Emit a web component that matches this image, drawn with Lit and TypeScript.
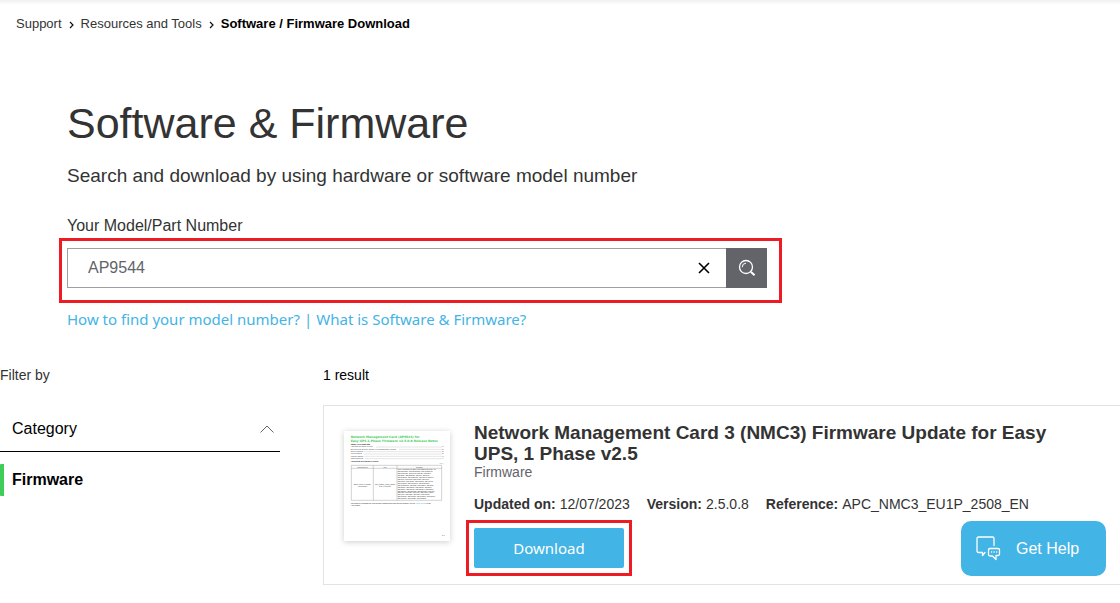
import { LitElement, html, svg, css } from "lit";
import { customElement, property, state } from "lit/decorators.js";

@customElement("bread-crumbs")
class BreadCrumbs extends LitElement {
  static styles = css`
    :host { display: block; }
    .list { display: flex; flex-wrap: wrap; margin: 0; padding: 0; list-style: none; font-size: 13px; line-height: 16px; }
    .item { display: flex; align-items: center; }
    .link { color: #333; text-decoration: none; }
    .link:hover { text-decoration: underline; }
    .current { color: #000; font-weight: 700; }
    .arrow { width: 5px; height: 8px; margin: 2px 7px 0; fill: none; stroke: #111; stroke-width: 1.2; }
  `;
  render() {
    const arrow = html`<svg class="arrow" viewBox="0 0 5 8" aria-hidden="true"><path d="M1 1l3 3-3 3" /></svg>`;
    return html`<nav aria-label="Breadcrumb">
      <ol class="list">
        <li class="item"><a class="link" href="#support">Support</a>${arrow}</li>
        <li class="item"><a class="link" href="#tools">Resources and Tools</a>${arrow}</li>
        <li class="item"><span class="current" aria-current="page">Software / Firmware Download</span></li>
      </ol>
    </nav>`;
  }
}

@customElement("model-search")
class ModelSearch extends LitElement {
  @state() value = "AP9544";
  static styles = css`
    :host { display: block; }
    .label { display: block; margin-bottom: 12px; font-size: 16px; line-height: 20px; color: #333; }
    .row { position: relative; display: flex; height: 40px; max-width: 700px; }
    .row::after { content: ""; position: absolute; inset: -10px -15px -15px -8px; border: 3px solid #ed1c24; pointer-events: none; }
    .field { display: flex; flex: 1; min-width: 0; border: 1px solid #9fa0a4; border-right: 0; background: #fff; }
    .input { flex: 1; min-width: 0; padding: 0 20px; border: 0; outline: 0; background: none; font: inherit; font-size: 16px; color: #626469; }
    .clear { display: grid; place-items: center; width: 44px; padding: 0; border: 0; background: none; cursor: pointer; }
    .go { display: grid; place-items: center; width: 41px; padding: 0; border: 0; background: #626469; cursor: pointer; }
    .cross { width: 12px; height: 12px; stroke: #000; stroke-width: 1.6; fill: none; }
    .glass { width: 18px; height: 18px; stroke: #fff; fill: none; }
  `;
  render() {
    return html`<form role="search" @submit=${(e: Event) => e.preventDefault()}>
      <label class="label" for="model">Your Model/Part Number</label>
      <div class="row">
        <div class="field">
          <input class="input" id="model" type="text" .value=${this.value}
            @input=${(e: Event) => (this.value = (e.target as HTMLInputElement).value)} />
          <button class="clear" type="button" aria-label="Clear" @click=${() => (this.value = "")}>
            <svg class="cross" viewBox="0 0 12 12"><path d="M1 1l10 10M11 1L1 11" /></svg>
          </button>
        </div>
        <button class="go" type="submit" aria-label="Search">
          <svg class="glass" viewBox="0 0 18 18">
            <circle cx="8" cy="8" r="6.5" stroke-width="1.3" />
            <path d="M4.2 8.2A4 4 0 0 1 8 4.2" stroke-width="1" />
            <path d="M12.2 12.2l1.2 1.2" stroke-width="1.2" />
            <path d="M13 13l3.6 3.2" stroke-width="2" />
          </svg>
        </button>
      </div>
    </form>`;
  }
}

const CONTENTS: [string, string][] = [
  ["Affected Revision Levels", "1"],
  ["Device/Web Device Check IP Configuration Wizard", "2"],
  ["New Features", "2"],
  ["Fixed Issues", "2"],
  ["Known Issues", "3"],
  ["Miscellaneous", "4"],
];
const MODELS = [
  "UPS Application for Easy UPS models SRVS1KI, IN",
  "SRVS1KRIRK, SRVS1KRILRK, SRV1KRIRK-E,",
  "SRV1KRILRK, SRV1KI-E, SRV2KI, SRV2KIL,",
  "SRV2KRI, SRV2KRIRK, SRV3KI, SRV3KIL,",
  "SRV3KRIRK, SRV3KRILRK, SRV3KI-E, SRV6KI,",
  "SRV6KIL, SRV6KRI, SRV6KRIL, SRV10KI,",
  "SRV10KIL, SRV10KRI, SRV10KRIL, SRV6KI-E,",
  "SRVPM6KIL, SRVPM10KIL, SRVPM6KRIL,",
  "SRVPM10KRIL, SRVS2KI, SRVS2KIL, SRVS3KI,",
  "SRVS3KIL, SRVS2KRI, SRVS3KRI, SRVS6KI,",
  "SRVS6KIL, SRVS6KRI, SRVS6KRIL, SRVS10KI,",
  "SRVS10KIL, SRVS10KRI, SRVS10KRIL, SRVL1K,",
  "SRVL2KI, SRVL3KI, SRVL6KI, SRVL10KI, SRVL",
  "SRVP1KI, SRVP2KI, SRVP3KI, SRVP6KRI,",
  "SRVP10KRI, SRVPM3KI, SRVPM3KIL, SRVPM1K,",
  "SRVPM1KIL, SRVPM2KI, SRVPM2KIL",
];

@customElement("release-notes-thumb")
class ReleaseNotesThumb extends LitElement {
  static styles = css`
    :host { display: block; width: 106px; flex: none; }
    .page { display: block; width: 100%; background: #fff; box-shadow: 0 1px 6px rgba(0, 0, 0, 0.2); }
    .title { font: 700 9px "DejaVu Sans"; fill: #3dcd58; }
    .small { font: 6px "Liberation Sans"; fill: #444; }
    .model { font: 5px "Liberation Sans"; fill: #222; }
    .head { font: 700 7px "Liberation Sans"; fill: #222; }
    .blue { font: 6px "Liberation Sans"; fill: #42b4e6; }
    .mid { text-anchor: middle; }
    .dots { stroke: #888; stroke-width: 1; stroke-dasharray: 2 1; }
    .grid { stroke: #777; stroke-width: 1; fill: none; }
  `;
  render() {
    return html`<svg class="page" viewBox="0 0 318 330" role="img" aria-label="Release notes preview">
      <text class="title" x="20" y="21">Network Management Card (AP9544) for</text>
      <text class="title" x="20" y="32">Easy UPS 1-Phase Firmware v2.5.0.8 Release Notes</text>
      <text class="head" x="20" y="42">Table of Contents</text>
      ${CONTENTS.map(([name, page], i) => svg`
        <text class="small" x="20" y=${49 + i * 7}>${name}</text>
        <path class="dots" d="M${24 + name.length * 3} ${48 + i * 7}H293" />
        <text class="small" x="295" y=${49 + i * 7}>${page}</text>`)}
      <text class="head" x="20" y="94">Affected Revision Levels</text>
      <text class="blue" x="286" y="98">Top ↑</text>
      <path class="grid" d="M22 103H293V208H22ZM22 112H293M88 103V208M159 103V208" />
      <text class="small mid" x="55" y="110">Component</text>
      <text class="small mid" x="123" y="110">File</text>
      <text class="small mid" x="226" y="110">Details</text>
      <text class="small mid" x="55" y="161">Easy UPS 1-Phase</text>
      <text class="small mid" x="55" y="167">Application</text>
      <text class="small mid" x="123" y="161">apc_hw21_su1p_2508</text>
      <text class="small mid" x="123" y="167">2-5-0-8.nmc3</text>
      ${MODELS.map((line, i) => svg`<text class="model" x="161" y=${118 + i * 6 - (i >> 2)}>${line}</text>`)}
      <text class="model" x="20" y="219">For details on upgrading the UPS Network Management Card (NMC3) firmware, see the <tspan class="blue">User Guide</tspan> on the</text>
      <text class="model" x="20" y="226">APC website.</text>
      <text class="small" x="294" y="315">1/4</text>
    </svg>`;
  }
}

@customElement("result-card")
class ResultCard extends LitElement {
  @property() heading = "";
  @property() kind = "";
  @property({ attribute: false }) facts: [string, string][] = [];
  static styles = css`
    :host { display: block; }
    .card { display: flex; gap: 24px; padding: 16px 20px; border: 1px solid #e3e3e3; border-right: 0; }
    .thumb { margin-top: 9px; }
    .body { flex: 1; min-width: 0; }
    .title { max-width: 600px; margin: 0; font-size: 19px; line-height: 21px; font-weight: 700; color: #333; }
    .kind { margin: 0; font-size: 14px; line-height: 16px; color: #626469; }
    .facts { display: flex; flex-wrap: wrap; gap: 4px 17px; margin: 16px 0; font-size: 14px; line-height: 16px; color: #333; }
    .fact { display: flex; gap: 4px; }
    .name { font-weight: 700; }
    .value { margin: 0; }
    .action { position: relative; display: inline-block; }
    .action::after { content: ""; position: absolute; inset: -8px; border: 3px solid #ed1c24; pointer-events: none; }
    .download { display: block; width: 150px; height: 40px; padding: 0; border: 0; border-radius: 2px; background: #42b4e6; color: #fff; font-family: "Noto Sans", sans-serif; font-size: 15px; cursor: pointer; }
  `;
  render() {
    return html`<article class="card">
      <release-notes-thumb class="thumb"></release-notes-thumb>
      <div class="body">
        <h2 class="title">${this.heading}</h2>
        <p class="kind">${this.kind}</p>
        <dl class="facts">
          ${this.facts.map(([n, v]) => html`<div class="fact"><dt class="name">${n}:</dt><dd class="value">${v}</dd></div>`)}
        </dl>
        <div class="action"><button class="download" type="button">Download</button></div>
      </div>
    </article>`;
  }
}

@customElement("app-root")
class AppRoot extends LitElement {
  @state() open = true;
  static styles = css`
    :host { display: block; min-height: 100vh; box-sizing: border-box; overflow-x: hidden; background: #fff; color: #333; font-family: "Liberation Sans", Arial, sans-serif; }
    .top { padding: 16px; background: linear-gradient(#f1f1f1, #fff 5px); }
    .hero { padding: 51px 67px 0; }
    .title { margin: 0; font-size: 43px; line-height: 48px; font-weight: 400; }
    .lead { margin: 17px 0 28px; font-size: 19px; line-height: 24px; }
    .links { display: flex; flex-wrap: wrap; margin-top: 20px; font-family: "Noto Sans", sans-serif; font-size: 15px; line-height: 22px; color: #42b4e6; }
    .link { color: inherit; text-decoration: none; }
    .link:hover { text-decoration: underline; }
    .bar { margin: 0 4px; }
    .layout { display: grid; grid-template-columns: 280px 1fr; gap: 43px; padding-top: 37px; }
    .by { margin: 0; font-size: 14px; line-height: 16px; }
    .toggle { display: flex; align-items: center; justify-content: space-between; width: 100%; height: 46px; margin-top: 23px; padding: 0 6px 0 12px; border: 0; border-bottom: 1px solid #000; background: none; font: inherit; font-size: 16px; color: #000; cursor: pointer; }
    .chevron { width: 14px; height: 8px; fill: none; stroke: #626469; }
    .options { margin: 12px 0 0; padding: 0; list-style: none; }
    .option { display: block; padding-left: 8px; border-left: 4px solid #3dcd58; border-radius: 1px; font-size: 16px; line-height: 32px; font-weight: 700; color: #000; text-decoration: none; }
    .count { margin: 0 0 22px; font-size: 14px; line-height: 16px; color: #000; }
    .help { position: fixed; right: 14px; bottom: 27px; display: flex; align-items: center; gap: 15px; width: 145px; height: 55px; padding: 0 15px; border: 0; border-radius: 10px; background: #42b4e6; color: #fff; font: inherit; font-size: 16px; white-space: nowrap; cursor: pointer; }
    .chat { width: 25px; height: 25px; flex: none; fill: none; stroke: #fff; stroke-width: 1.3; stroke-linejoin: round; stroke-linecap: round; }
  `;
  render() {
    return html`
      <header class="top"><bread-crumbs></bread-crumbs></header>
      <main>
        <section class="hero">
          <h1 class="title">Software &amp; Firmware</h1>
          <p class="lead">Search and download by using hardware or software model number</p>
          <model-search></model-search>
          <div class="links">
            <a class="link" href="#find">How to find your model number?</a><span class="bar">|</span><a class="link" href="#what">What is Software &amp; Firmware?</a>
          </div>
        </section>
        <div class="layout">
          <aside>
            <p class="by">Filter by</p>
            <button class="toggle" type="button" aria-expanded=${this.open} @click=${() => (this.open = !this.open)}>
              Category
              <svg class="chevron" viewBox="0 0 14 8"><path d="M.5 7.5L7 1l6.500 6.500" /></svg>
            </button>
            ${this.open ? html`<ul class="options"><li><a class="option" href="#firmware">Firmware</a></li></ul>` : ""}
          </aside>
          <section>
            <p class="count">1 result</p>
            <result-card
              heading="Network Management Card 3 (NMC3) Firmware Update for Easy UPS, 1 Phase v2.5"
              kind="Firmware"
              .facts=${[["Updated on", "12/07/2023"], ["Version", "2.5.0.8"], ["Reference", "APC_NMC3_EU1P_2508_EN"]]}
            ></result-card>
          </section>
        </div>
      </main>
      <button class="help" type="button">
        <svg class="chat" viewBox="0 0 25 25">
          <path d="M9 16.500L6.500 19.500V16.500H2.500A1.500 1.500 0 0 1 1 15V2.500A1.500 1.500 0 0 1 2.500 1H16.500A1.500 1.500 0 0 1 18 2.500V9.500" />
          <path d="M14 12.500H22A1.500 1.500 0 0 1 23.500 14V18A1.500 1.500 0 0 1 22 19.500H20V23.500L16.500 20H14A1.500 1.500 0 0 1 12.500 18.500V14A1.500 1.500 0 0 1 14 12.500Z" />
          <path d="M15.500 16h.2M18 16h.2M20.500 16h.2" />
        </svg>
        Get Help
      </button>
    `;
  }
}
